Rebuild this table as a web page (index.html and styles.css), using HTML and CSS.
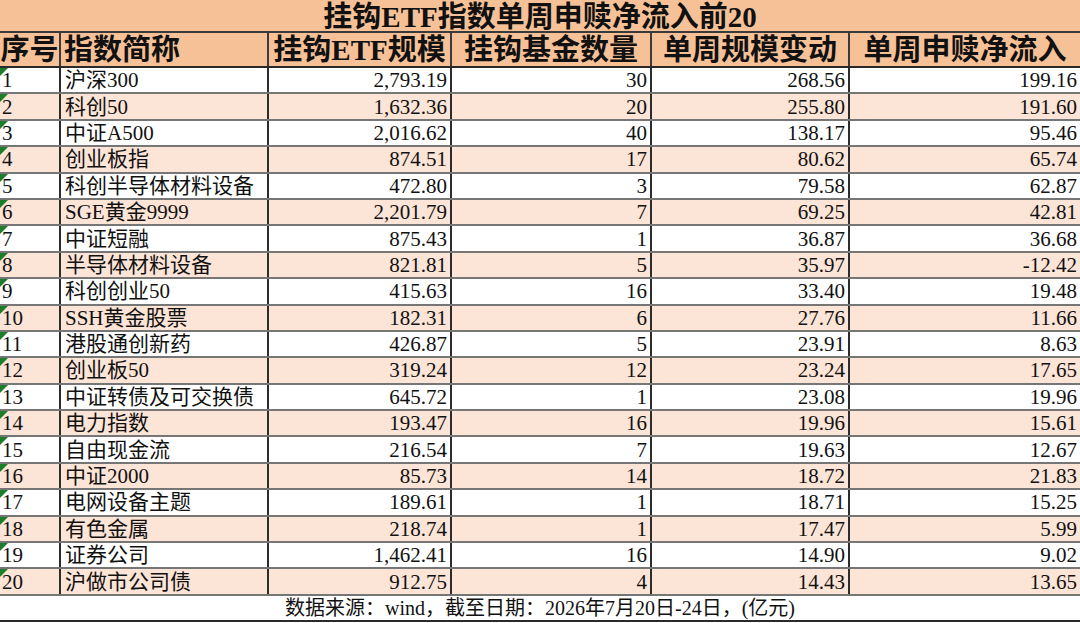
FILE: index.html
```html
<!DOCTYPE html>
<html lang="zh-CN">
<head>
<meta charset="utf-8">
<title>挂钩ETF指数单周申赎净流入前20</title>
<link rel="stylesheet" href="styles.css">
</head>
<body>
<div class="sheet">
  <div class="title">挂钩ETF指数单周申赎净流入前20</div>
  <div class="row head">
    <div class="cell">序号</div><div class="cell left">指数简称</div><div class="cell">挂钩ETF规模</div><div class="cell">挂钩基金数量</div><div class="cell">单周规模变动</div><div class="cell">单周申赎净流入</div>
  </div>
  <div class="row"><div class="cell idx"><span class="flag"></span>1</div><div class="cell name">沪深300</div><div class="cell num">2,793.19</div><div class="cell num">30</div><div class="cell num">268.56</div><div class="cell num">199.16</div></div>
  <div class="row alt"><div class="cell idx"><span class="flag"></span>2</div><div class="cell name">科创50</div><div class="cell num">1,632.36</div><div class="cell num">20</div><div class="cell num">255.80</div><div class="cell num">191.60</div></div>
  <div class="row"><div class="cell idx"><span class="flag"></span>3</div><div class="cell name">中证A500</div><div class="cell num">2,016.62</div><div class="cell num">40</div><div class="cell num">138.17</div><div class="cell num">95.46</div></div>
  <div class="row alt"><div class="cell idx"><span class="flag"></span>4</div><div class="cell name">创业板指</div><div class="cell num">874.51</div><div class="cell num">17</div><div class="cell num">80.62</div><div class="cell num">65.74</div></div>
  <div class="row"><div class="cell idx"><span class="flag"></span>5</div><div class="cell name">科创半导体材料设备</div><div class="cell num">472.80</div><div class="cell num">3</div><div class="cell num">79.58</div><div class="cell num">62.87</div></div>
  <div class="row alt"><div class="cell idx"><span class="flag"></span>6</div><div class="cell name">SGE黄金9999</div><div class="cell num">2,201.79</div><div class="cell num">7</div><div class="cell num">69.25</div><div class="cell num">42.81</div></div>
  <div class="row"><div class="cell idx"><span class="flag"></span>7</div><div class="cell name">中证短融</div><div class="cell num">875.43</div><div class="cell num">1</div><div class="cell num">36.87</div><div class="cell num">36.68</div></div>
  <div class="row alt"><div class="cell idx"><span class="flag"></span>8</div><div class="cell name">半导体材料设备</div><div class="cell num">821.81</div><div class="cell num">5</div><div class="cell num">35.97</div><div class="cell num">-12.42</div></div>
  <div class="row"><div class="cell idx"><span class="flag"></span>9</div><div class="cell name">科创创业50</div><div class="cell num">415.63</div><div class="cell num">16</div><div class="cell num">33.40</div><div class="cell num">19.48</div></div>
  <div class="row alt"><div class="cell idx"><span class="flag"></span>10</div><div class="cell name">SSH黄金股票</div><div class="cell num">182.31</div><div class="cell num">6</div><div class="cell num">27.76</div><div class="cell num">11.66</div></div>
  <div class="row"><div class="cell idx"><span class="flag"></span>11</div><div class="cell name">港股通创新药</div><div class="cell num">426.87</div><div class="cell num">5</div><div class="cell num">23.91</div><div class="cell num">8.63</div></div>
  <div class="row alt"><div class="cell idx"><span class="flag"></span>12</div><div class="cell name">创业板50</div><div class="cell num">319.24</div><div class="cell num">12</div><div class="cell num">23.24</div><div class="cell num">17.65</div></div>
  <div class="row"><div class="cell idx"><span class="flag"></span>13</div><div class="cell name">中证转债及可交换债</div><div class="cell num">645.72</div><div class="cell num">1</div><div class="cell num">23.08</div><div class="cell num">19.96</div></div>
  <div class="row alt"><div class="cell idx"><span class="flag"></span>14</div><div class="cell name">电力指数</div><div class="cell num">193.47</div><div class="cell num">16</div><div class="cell num">19.96</div><div class="cell num">15.61</div></div>
  <div class="row"><div class="cell idx"><span class="flag"></span>15</div><div class="cell name">自由现金流</div><div class="cell num">216.54</div><div class="cell num">7</div><div class="cell num">19.63</div><div class="cell num">12.67</div></div>
  <div class="row alt"><div class="cell idx"><span class="flag"></span>16</div><div class="cell name">中证2000</div><div class="cell num">85.73</div><div class="cell num">14</div><div class="cell num">18.72</div><div class="cell num">21.83</div></div>
  <div class="row"><div class="cell idx"><span class="flag"></span>17</div><div class="cell name">电网设备主题</div><div class="cell num">189.61</div><div class="cell num">1</div><div class="cell num">18.71</div><div class="cell num">15.25</div></div>
  <div class="row alt"><div class="cell idx"><span class="flag"></span>18</div><div class="cell name">有色金属</div><div class="cell num">218.74</div><div class="cell num">1</div><div class="cell num">17.47</div><div class="cell num">5.99</div></div>
  <div class="row"><div class="cell idx"><span class="flag"></span>19</div><div class="cell name">证券公司</div><div class="cell num">1,462.41</div><div class="cell num">16</div><div class="cell num">14.90</div><div class="cell num">9.02</div></div>
  <div class="row alt"><div class="cell idx"><span class="flag"></span>20</div><div class="cell name">沪做市公司债</div><div class="cell num">912.75</div><div class="cell num">4</div><div class="cell num">14.43</div><div class="cell num">13.65</div></div>
  <div class="foot">数据来源：wind，截至日期：2026年7月20日-24日，(亿元)</div>
</div>
</body>
</html>
```
FILE: styles.css
```css
html, body {
  margin: 0;
  padding: 0;
  background: #ffffff;
}

body {
  font-family: "Liberation Serif", "Noto Sans CJK SC", serif;
  color: #111111;
}

.sheet {
  width: 1080px;
  display: flex;
  flex-direction: column;
}

.title {
  box-sizing: border-box;
  height: 33px;
  padding-top: 3px;
  background: #f7c197;
  font-size: 29px;
  font-weight: 700;
  line-height: 28px;
  text-align: center;
  white-space: nowrap;
  overflow: hidden;
  border-bottom: 2px solid #3a3a3a;
}

.row {
  box-sizing: border-box;
  display: grid;
  grid-template-columns: 61px 208px 183px 200px 198px 230px;
  height: 26.4px;
  border-bottom: 2px solid #767676;
  background: #ffffff;
}

.row.alt {
  background: #fce4d6;
}

.cell {
  display: flex;
  align-items: center;
  min-width: 0;
  font-size: 21px;
  line-height: 22px;
  white-space: nowrap;
  border-right: 2px solid #2c2c2c;
}

.cell:last-child {
  border-right: none;
}

.row.head {
  height: 35px;
  background: #f7c197;
  border-bottom: 2px solid #2a2a2a;
}

.head .cell {
  justify-content: center;
  font-size: 29px;
  font-weight: 700;
  line-height: 32px;
  border-right-color: #3a3a3a;
}

.head .cell.left {
  justify-content: flex-start;
  padding-left: 3px;
}

.cell.idx {
  position: relative;
  padding-left: 2px;
}

.cell.name {
  padding-left: 4px;
}

.cell.num {
  justify-content: flex-end;
  padding-right: 3px;
}

.flag {
  position: absolute;
  left: 0;
  top: 0;
  width: 0;
  height: 0;
  border-top: 8px solid #1e7d2a;
  border-right: 8px solid transparent;
}

.foot {
  box-sizing: border-box;
  height: 26px;
  font-size: 20px;
  line-height: 24px;
  text-align: center;
  white-space: nowrap;
  border-bottom: 2px solid #2a2a2a;
}
```
